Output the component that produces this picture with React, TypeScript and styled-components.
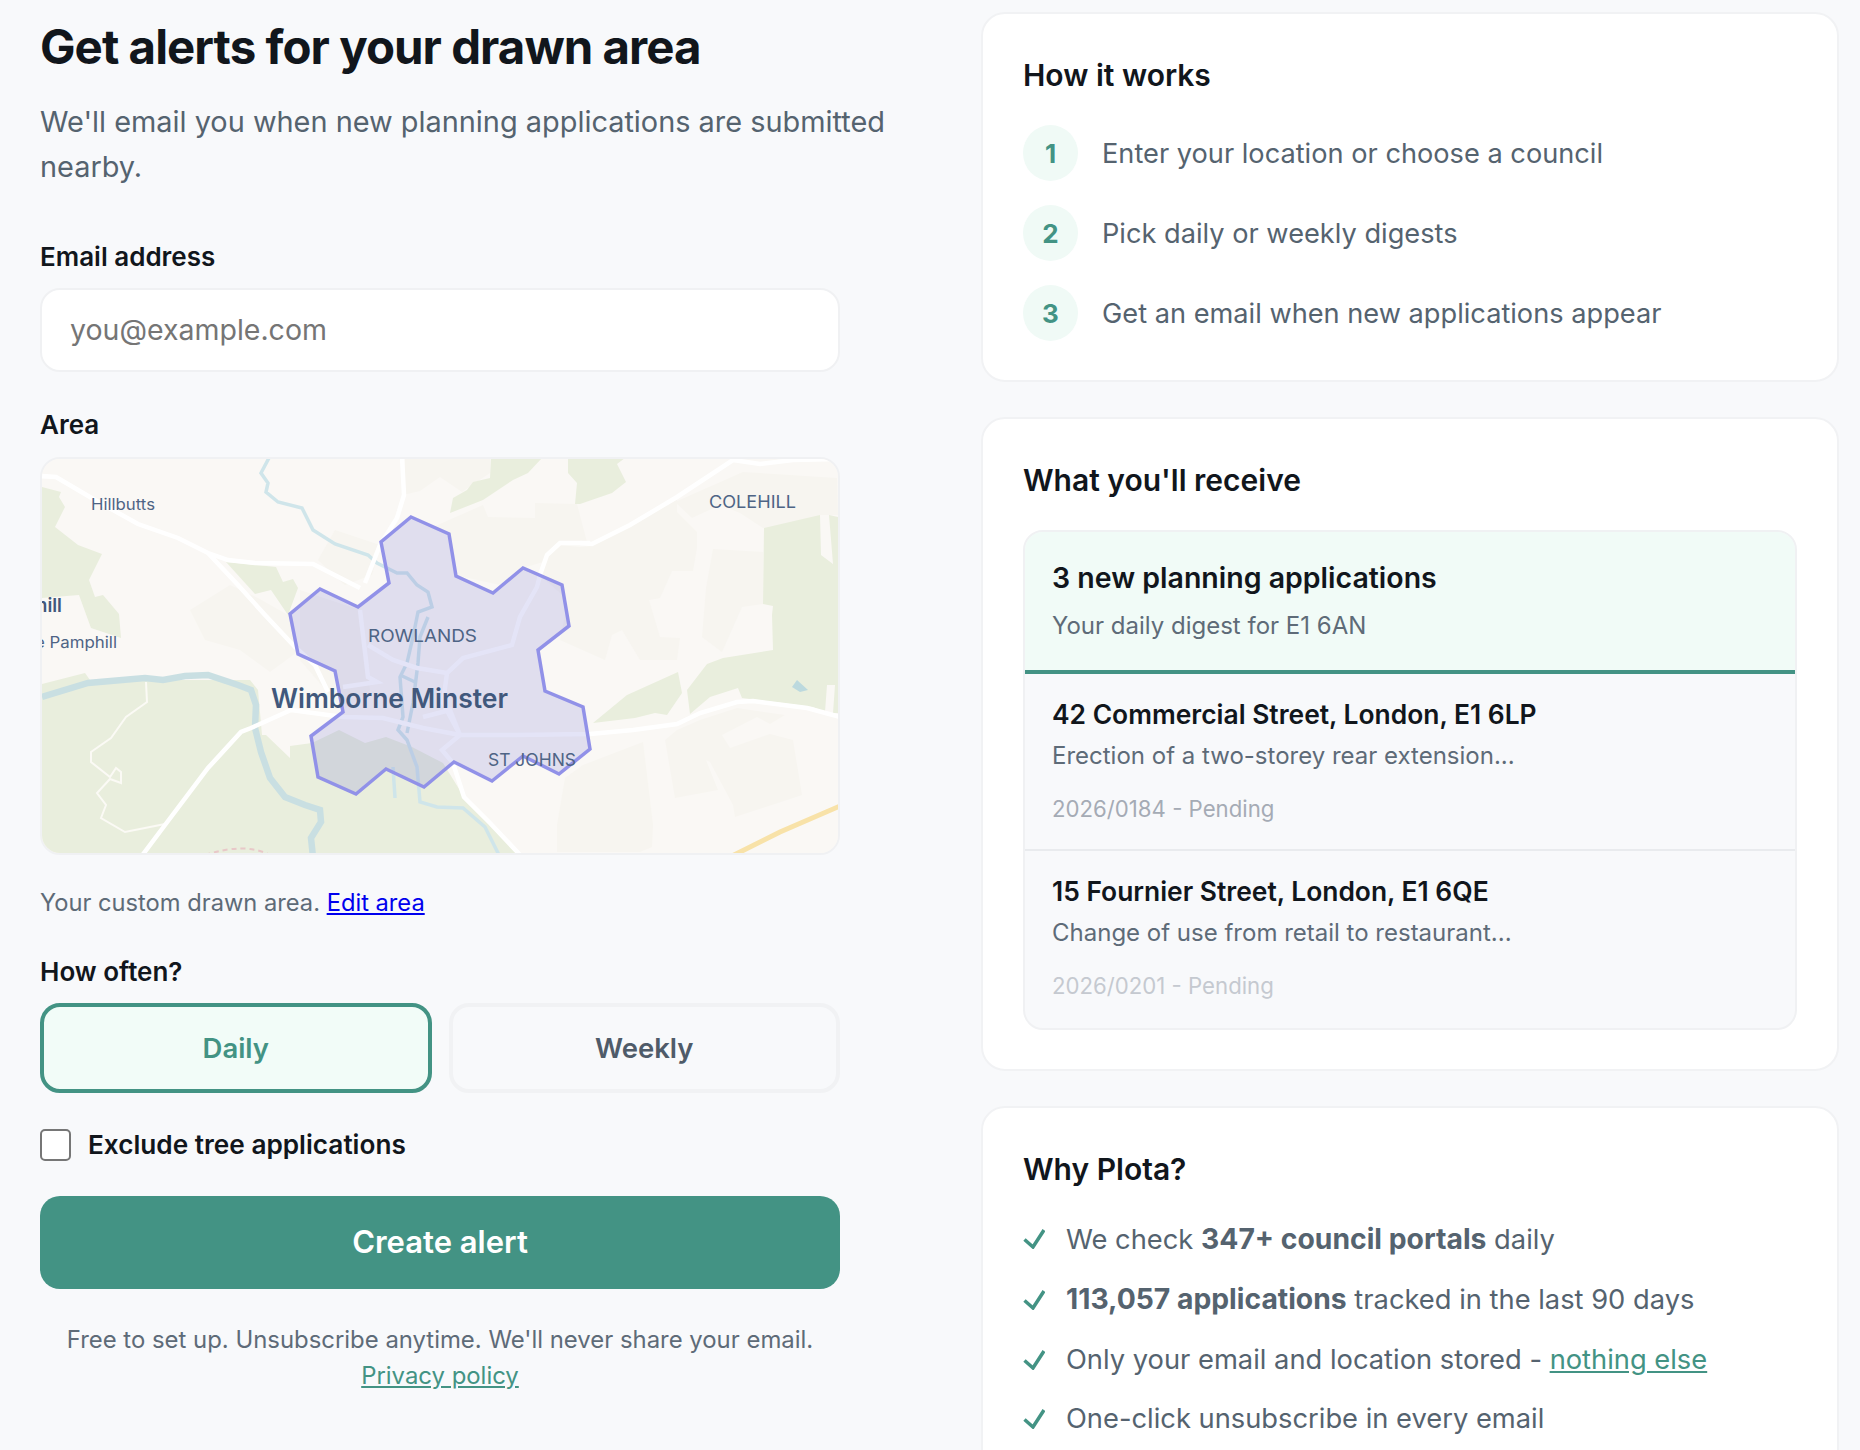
import React from 'react'
import styled, { createGlobalStyle } from 'styled-components'

const GlobalStyle = createGlobalStyle`
  html, body {
    margin: 0;
    background: #f8f9fb;
    font-family: Inter, "Liberation Sans", sans-serif;
    color: #11161c;
  }
`

const Page = styled.div`
  height: 1450px;
  overflow: hidden;
  box-sizing: border-box;
  padding: 19px 21px 0 40px;
  display: flex;
  justify-content: space-between;
  align-items: flex-start;
`

const LeftColumn = styled.div`
  width: 941px;
`

const Form = styled.form`
  width: 800px;
`

const RightColumn = styled.div`
  width: 858px;
  margin-top: -7px;
  display: flex;
  flex-direction: column;
  gap: 34.5px;
`

const Title = styled.h1`
  margin: 0;
  font-size: 47.4px;
  line-height: 56px;
  font-weight: 700;
  letter-spacing: -0.02em;
`

const Intro = styled.p`
  margin: 24px 0 0;
  font-size: 28.9px;
  line-height: 45px;
  color: #55636f;
`

const Label = styled.label<{ $top: number; $bottom: number }>`
  display: block;
  margin: ${(p) => p.$top}px 0 ${(p) => p.$bottom}px;
  font-size: 26px;
  line-height: 32px;
  font-weight: 600;
`

const EmailInput = styled.input`
  display: block;
  box-sizing: border-box;
  width: 100%;
  height: 84px;
  padding: 0 28px 2px;
  background: #fff;
  border: 2px solid #f0f1f3;
  border-radius: 20px;
  outline: none;
  font-family: inherit;
  font-size: 28.5px;
  color: #11161c;
`

const MapFrame = styled.div`
  box-sizing: border-box;
  height: 398px;
  border: 2px solid #f0f1f3;
  border-radius: 20px;
  overflow: hidden;
  background: #faf8f5;

  svg {
    display: block;
    width: 100%;
    height: 100%;
  }
`

const MapCaption = styled.p`
  margin: 32px 0 0;
  font-size: 23.7px;
  line-height: 32px;
  color: #5e6b78;

  a {
    color: #0000ee;
  }
`

const FrequencyRow = styled.div`
  display: grid;
  grid-template-columns: 1fr 1fr;
  gap: 17px;
`

const FrequencyButton = styled.button<{ $active?: boolean }>`
  height: 90px;
  border-radius: 20px;
  border: 4px solid ${(p) => (p.$active ? '#439384' : '#f1f2f4')};
  background: ${(p) => (p.$active ? '#f2fcf8' : 'transparent')};
  color: ${(p) => (p.$active ? '#439384' : '#4f5b69')};
  font-family: inherit;
  font-size: 27.5px;
  font-weight: 600;
`

const CheckRow = styled.label`
  display: flex;
  align-items: center;
  gap: 17px;
  margin-top: 36px;
  font-size: 26.2px;
  line-height: 32px;
  font-weight: 600;

  input {
    appearance: none;
    box-sizing: border-box;
    width: 31px;
    height: 32px;
    margin: 0;
    background: #fff;
    border: 2px solid #767676;
    border-radius: 5px;
  }
`

const SubmitButton = styled.button`
  display: block;
  width: 100%;
  height: 93px;
  margin-top: 35px;
  padding: 0 0 2px;
  border: none;
  border-radius: 20px;
  background: #439384;
  color: #fff;
  font-family: inherit;
  font-size: 31px;
  font-weight: 600;
`

const FinePrint = styled.p`
  margin: 33px 0 0;
  text-align: center;
  font-size: 23.9px;
  line-height: 36px;
  color: #5e6b78;

  a {
    color: #439384;
  }
`

const Card = styled.section<{ $bottom: number }>`
  box-sizing: border-box;
  background: #fff;
  border: 2px solid #f1f2f4;
  border-radius: 24px;
  padding: 42px 40px ${(p) => p.$bottom}px;
`

const CardTitle = styled.h2`
  margin: 0;
  font-size: 30px;
  line-height: 38px;
  font-weight: 600;
`

const Steps = styled.ol`
  list-style: none;
  margin: 31px 0 0;
  padding: 0;
  display: flex;
  flex-direction: column;
  gap: 24px;
`

const Step = styled.li`
  display: flex;
  align-items: center;
  gap: 24px;
  font-size: 27.2px;
  color: #55636f;
`

const StepNumber = styled.span`
  width: 55px;
  height: 56px;
  flex: none;
  border-radius: 50%;
  background: #f0faf6;
  color: #439384;
  font-weight: 700;
  font-size: 26px;
  display: flex;
  align-items: center;
  justify-content: center;
`

const Preview = styled.div`
  margin-top: 31.5px;
  border: 2px solid #f0f1f3;
  border-radius: 20px;
  overflow: hidden;
  background: #f8f9fb;
`

const PreviewHeader = styled.div`
  padding: 29px 28px 28px 27px;
  background: #f1fbf7;
  border-bottom: 4px solid #439384;
`

const PreviewTitle = styled.div`
  font-size: 28.5px;
  line-height: 34px;
  font-weight: 600;
`

const PreviewSub = styled.div`
  margin-top: 15px;
  font-size: 24px;
  line-height: 32px;
  color: #5e6b78;
`

const PreviewItem = styled.div<{ $last?: boolean }>`
  padding: 23px 28px ${(p) => (p.$last ? 27 : 25)}px 27px;
  border-bottom: ${(p) => (p.$last ? 'none' : '2px solid #e9ebee')};
`

const ItemAddress = styled.div`
  font-size: 26.4px;
  line-height: 34px;
  font-weight: 600;
`

const ItemDescription = styled.div`
  margin-top: 9px;
  font-size: 24px;
  line-height: 32px;
  color: #5e6b78;
`

const ItemMeta = styled.div<{ $faded?: boolean }>`
  margin-top: 22px;
  font-size: 22.2px;
  line-height: 30px;
  color: ${(p) => (p.$faded ? '#c5c9d0' : '#a5abb5')};
`

const Reasons = styled.ul`
  list-style: none;
  margin: 30px 0 0;
  padding: 0;
  display: flex;
  flex-direction: column;
  gap: 17.5px;
`

const Reason = styled.li`
  display: flex;
  align-items: center;
  gap: 21px;
  font-size: 27.3px;
  line-height: 42px;
  color: #55636f;

  b {
    font-size: 28.3px;
    font-weight: 700;
  }

  a {
    color: #439384;
  }
`

const Check = () => (
  <svg width="22" height="20" viewBox="0 0 22 20" fill="none" stroke="#439384" strokeWidth="3.5" style={{ flex: 'none' }}>
    <path d="M1.5 10.5 L10 18 L21 1" />
  </svg>
)

const greens = [
  '42,487 61,492 59,497 65,507 55,527 78,545 102,554 89,580 95,597 103,595 119,614 121,638 91,628 79,595 42,598',
  '226,562 276,567 283,582 293,579 298,588 288,615 271,590 255,594',
  '42,684 85,673 90,680 250,680 258,690 262,735 266,735 290,758 290,746 312,743 339,730 365,743 386,737 412,747 443,763 464,797 490,823 522,860 40,860',
  '450,513 453,498 467,490 473,482 490,478 491,458 542,458 528,473 513,480 483,500',
  '568,458 568,473 577,483 575,504 580,504 612,493 626,482 617,464 625,458',
  '593,723 627,695 678,672 682,693 667,715 655,713 635,718',
  '764,528 820,515 821,555 833,564 829,515 838,517 838,713 833,713 835,685 827,685 825,712 813,707 742,698 738,688 710,697 690,714 687,690 707,664 723,658 773,650 772,615 773,606 763,604',
]

const patches = [
  '675,502 743,472 837,478 838,515 820,515 797,528 763,528 740,513 720,505 692,518',
  '580,547 592,546 677,497 677,512 697,532 697,548 693,571 672,571 660,598 649,600 660,637 680,638 677,660 640,660 622,630 612,635 605,660 560,640 568,600 540,575 547,555 560,545',
  '713,549 763,552 763,604 742,607 722,652 702,637 706,588',
  '665,740 675,798 718,790 706,760 710,762 733,805 735,817 802,795 793,740 770,734 730,748 722,735 757,717 770,724 785,715 737,708 700,720 677,730',
  '557,852 557,825 565,778 583,765 643,742 653,825 652,847 640,852',
  '405,458 490,458 490,473 462,492 440,477 420,491 403,495',
  '433,527 483,505 488,517 535,518 535,503 577,504 587,542 560,543 543,562 523,568 500,585 455,575 448,535',
  '190,610 230,585 258,598 288,615 300,650 270,672 240,650 205,640',
  '335,530 380,545 372,575 345,585 318,560',
  '300,590 360,610 370,690 343,710 300,660',
]

const roads = [
  'M40 476 L56 477 L95 500 L138 524 L178 538 L208 553 L228 560 L255 563 L313 564 L360 588',
  'M402 456 L404 495 L397 518 L380 545 L365 583',
  'M208 553 L238 585 L265 615 L295 647 L315 665 L328 692',
  'M141 857 L165 825 L208 768 L241 732 L251 728 L291 710 L343 717 L383 718 L423 728 L460 735 L517 735 L590 734 L633 730 L677 724 L700 713 L737 702 L753 701 L807 708 L840 717',
  'M580 543 L592 544 L630 525 L677 497 L733 460 L760 464 L793 460 L840 459',
  'M590 543 L560 543 L547 555 L540 575 L537 587 L520 617 L512 645 L463 658 L447 673 L443 703 L460 735',
  'M368 645 L393 660 L417 668 L447 673',
  'M360 610 L368 677 L377 682 L343 687',
  'M460 735 L442 750 L453 763 L464 797 L490 823 L522 857',
  'M423 717 L450 710 L460 735',
]

const streams = [
  'M270 456 L261 473 L268 483 L266 492 L278 502 L302 508 L313 530 L335 544 L368 555 L377 563 L397 573 L407 573 L417 585 L428 592 L432 607 L418 612 L413 637 L407 663 L400 677 L403 717 L398 730 L407 740 L417 767 L420 802 L437 807 L463 808 L485 827 L500 857',
  'M428 617 L420 637 L418 663 L413 703 L407 733',
  'M400 675 L415 682',
  'M393 767 L395 798',
]

const outline =
  '411,517 449,534 456,576 493,593 523,568 562,585 569,626 538,650 545,691 583,707 590,749 559,774 523,756 492,781 454,762 424,787 386,769 356,794 318,777 311,736 343,712 335,671 298,654 290,614 320,589 358,607 389,583 381,542'

const MapLabel = styled.text<{ $strong?: boolean }>`
  font-family: Inter, "Liberation Sans", sans-serif;
  font-weight: ${(p) => (p.$strong ? 600 : 400)};
  fill: ${(p) => (p.$strong ? '#41587c' : '#4e6485')};
`

const AreaMap = () => (
  <svg viewBox="42 459 796 394" preserveAspectRatio="none">
    <rect x="42" y="459" width="796" height="394" fill="#faf8f5" />
    {patches.map((points) => (
      <polygon key={points} points={points} fill="#f7f5f0" />
    ))}
    {greens.map((points) => (
      <polygon key={points} points={points} fill="#e9eedd" />
    ))}
    <path
      d="M42 697 L88 683 L145 678 L163 680 L185 676 L208 675 L238 685 L251 690 L256 705 L255 728 L261 752 L270 778 L285 797 L305 805 L320 810 L321 822 L311 838 L313 857"
      fill="none"
      stroke="#c9dfe2"
      strokeWidth="6.5"
    />
    <path
      d="M146 682 L147 702 L126 717 L111 738 L91 752 L91 762 L110 777 L116 768 L121 772 L121 783 L110 779 L97 793 L106 805 L101 818 L125 832 L165 824"
      fill="none"
      stroke="#fbfaf5"
      strokeWidth="2"
    />
    <path d="M732 856 L780 832 L840 806" fill="none" stroke="#f8e2a8" strokeWidth="5" />
    <path d="M792 687 L797 680 L808 690 L800 692 Z" fill="#bcd9de" />
    {streams.map((d) => (
      <path key={d} d={d} fill="none" stroke="#cfe5ea" strokeWidth="3.5" />
    ))}
    {roads.map((d) => (
      <path key={d} d={d} fill="none" stroke="#fff" strokeWidth="4.5" />
    ))}
    <path d="M205 855 Q245 842 270 855" fill="none" stroke="#e8c8c8" strokeWidth="2" strokeDasharray="5 4" />
    <polygon points={outline} fill="rgba(105,103,210,0.18)" stroke="#9191e8" strokeWidth="3.5" />
    <MapLabel x="91" y="510" textLength="64" lengthAdjust="spacingAndGlyphs" fontSize="15.5">Hillbutts</MapLabel>
    <MapLabel x="709" y="508" textLength="87" lengthAdjust="spacingAndGlyphs" fontSize="17">COLEHILL</MapLabel>
    <MapLabel x="368" y="642" textLength="109" lengthAdjust="spacingAndGlyphs" fontSize="17">ROWLANDS</MapLabel>
    <MapLabel x="488" y="766" textLength="88" lengthAdjust="spacingAndGlyphs" fontSize="17">ST JOHNS</MapLabel>
    <MapLabel x="35" y="648" textLength="82" lengthAdjust="spacingAndGlyphs" fontSize="15.5">e Pamphill</MapLabel>
    <MapLabel x="36" y="612" textLength="26" lengthAdjust="spacingAndGlyphs" fontSize="19" $strong>hill</MapLabel>
    <MapLabel x="271" y="708" textLength="237" lengthAdjust="spacingAndGlyphs" fontSize="27" $strong>Wimborne Minster</MapLabel>
  </svg>
)

export default function App() {
  return (
    <>
      <GlobalStyle />
      <Page>
        <LeftColumn>
          <Title>Get alerts for your drawn area</Title>
          <Intro>We'll email you when new planning applications are submitted nearby.</Intro>
          <Form>
            <Label htmlFor="email" $top={52} $bottom={15}>Email address</Label>
            <EmailInput id="email" type="email" placeholder="you@example.com" />
            <Label $top={37} $bottom={16}>Area</Label>
            <MapFrame>
              <AreaMap />
            </MapFrame>
            <MapCaption>
              Your custom drawn area. <a href="#edit">Edit area</a>
            </MapCaption>
            <Label $top={37} $bottom={15}>How often?</Label>
            <FrequencyRow>
              <FrequencyButton type="button" $active>Daily</FrequencyButton>
              <FrequencyButton type="button">Weekly</FrequencyButton>
            </FrequencyRow>
            <CheckRow>
              <input type="checkbox" />
              Exclude tree applications
            </CheckRow>
            <SubmitButton type="button">Create alert</SubmitButton>
            <FinePrint>
              Free to set up. Unsubscribe anytime. We'll never share your email.
              <br />
              <a href="#privacy">Privacy policy</a>
            </FinePrint>
          </Form>
        </LeftColumn>
        <RightColumn>
          <Card $bottom={39}>
            <CardTitle>How it works</CardTitle>
            <Steps>
              <Step><StepNumber>1</StepNumber>Enter your location or choose a council</Step>
              <Step><StepNumber>2</StepNumber>Pick daily or weekly digests</Step>
              <Step><StepNumber>3</StepNumber>Get an email when new applications appear</Step>
            </Steps>
          </Card>
          <Card $bottom={39}>
            <CardTitle>What you'll receive</CardTitle>
            <Preview>
              <PreviewHeader>
                <PreviewTitle>3 new planning applications</PreviewTitle>
                <PreviewSub>Your daily digest for E1 6AN</PreviewSub>
              </PreviewHeader>
              <PreviewItem>
                <ItemAddress>42 Commercial Street, London, E1 6LP</ItemAddress>
                <ItemDescription>Erection of a two-storey rear extension...</ItemDescription>
                <ItemMeta>2026/0184 - Pending</ItemMeta>
              </PreviewItem>
              <PreviewItem $last>
                <ItemAddress>15 Fournier Street, London, E1 6QE</ItemAddress>
                <ItemDescription>Change of use from retail to restaurant...</ItemDescription>
                <ItemMeta $faded>2026/0201 - Pending</ItemMeta>
              </PreviewItem>
            </Preview>
          </Card>
          <Card $bottom={40}>
            <CardTitle>Why Plota?</CardTitle>
            <Reasons>
              <Reason><Check /><span>We check <b>347+ council portals</b> daily</span></Reason>
              <Reason><Check /><span><b>113,057 applications</b> tracked in the last 90 days</span></Reason>
              <Reason><Check /><span>Only your email and location stored - <a href="#data">nothing else</a></span></Reason>
              <Reason><Check /><span>One-click unsubscribe in every email</span></Reason>
            </Reasons>
          </Card>
        </RightColumn>
      </Page>
    </>
  )
}
